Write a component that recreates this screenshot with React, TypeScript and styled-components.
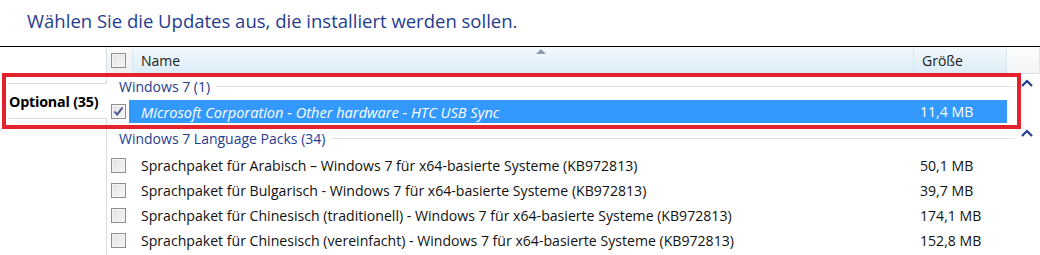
import React from "react";
import styled, { createGlobalStyle } from "styled-components";

const Global = createGlobalStyle`
  html, body { margin: 0; padding: 0; background: #fff; }
  body { font-family: "Open Sans", "Noto Sans", sans-serif; width: 1040px; height: 255px; overflow: hidden; }
`;

const Page = styled.div`
  position: relative;
  width: 1040px;
  height: 255px;
  overflow: hidden;
`;

const Title = styled.div`
  height: 46px;
  box-sizing: border-box;
  padding: 8px 0 0 27px;
  font-size: 18.5px;
  color: #1f3d8f;
`;

const Frame = styled.div`
  border-top: 1px solid #000;
  display: grid;
  grid-template-columns: 107px 1fr;
  height: 208px;
`;

const Sidebar = styled.div`
  border-right: 1px solid #d6dde3;
  padding-top: 36px;
`;

const Tab = styled.div`
  margin-left: 7px;
  margin-right: -1px;
  height: 34px;
  border-top: 1px solid #d6dde3;
  border-bottom: 1px solid #d6dde3;
  background: #fff;
  display: flex;
  align-items: center;
  padding-left: 2px;
  font-weight: 700;
  font-size: 14.3px;
  letter-spacing: -0.2px;
  color: #000;
  white-space: nowrap;
  position: relative;
  z-index: 1;
`;

const Content = styled.div`
  display: flex;
  flex-direction: column;
`;

const Header = styled.div`
  display: grid;
  grid-template-columns: 26px 781px 93px 1fr;
  height: 26px;
  border-bottom: 1px solid #d5e3ec;
`;

const HeadCell = styled.div<{ $tone: "gray" | "blue" | "plain" }>`
  position: relative;
  display: flex;
  align-items: center;
  padding-left: ${(p) => (p.$tone === "gray" ? "4px" : "8px")};
  border-right: 1px solid #dde6ec;
  font-size: 14px;
  color: #1a1a1a;
  background: ${(p) =>
    p.$tone === "blue"
      ? "linear-gradient(#f3f9fd, #dbecf7)"
      : p.$tone === "gray"
      ? "linear-gradient(#fafafa, #eef1f3)"
      : "linear-gradient(#fdfdfd, #f2f4f6)"};
`;

const SortArrow = styled.svg`
  position: absolute;
  top: 1px;
  left: 403px;
`;

const Box = styled.div`
  width: 13px;
  height: 13px;
  border: 1px solid #8f8f8f;
  background: linear-gradient(135deg, #e2e2e2, #f6f6f6);
  box-shadow: inset 0 0 0 1px #f4f4f4;
  display: flex;
  align-items: center;
  justify-content: center;
  flex: none;
`;

const GroupHead = styled.div<{ $h: number }>`
  height: ${(p) => p.$h}px;
  display: flex;
  align-items: center;
  padding-left: 12px;
  font-size: 14px;
  color: #1f3d8f;
  gap: 6px;
  position: relative;
`;

const GroupLine = styled.div`
  flex: 1;
  height: 1px;
  background: #dde3e8;
  margin-right: 25px;
`;

const Chevron = styled.svg`
  position: absolute;
  right: 7px;
  top: 5px;
`;

const Row = styled.div`
  height: 25px;
  display: grid;
  grid-template-columns: 18px 791px 87px;
  align-items: center;
  padding-left: 4px;
`;

const CheckCell = styled.div`
  display: flex;
  align-items: center;
`;

const NameCell = styled.div<{ $selected?: boolean }>`
  height: 23px;
  display: flex;
  align-items: center;
  padding-left: 12px;
  font-size: ${(p) => (p.$selected ? "14.6px" : "14.1px")};
  white-space: nowrap;
  color: ${(p) => (p.$selected ? "#fff" : "#111")};
  font-style: ${(p) => (p.$selected ? "italic" : "normal")};
  background: ${(p) => (p.$selected ? "#3399ff" : "transparent")};
`;

const SizeCell = styled(NameCell)`
  padding-left: 0;
  font-style: normal;
  font-size: 14.1px;
`;

const Highlight = styled.div`
  position: absolute;
  left: 2px;
  top: 73px;
  width: 1019px;
  height: 56px;
  box-sizing: border-box;
  border: 4px solid #e3222d;
  pointer-events: none;
  z-index: 5;
`;

const Check = () => (
  <svg width="11" height="11" viewBox="0 0 11 11">
    <path d="M1.5 5.5 L4.2 8.5 L9.5 1.5" fill="none" stroke="#3b4f86" strokeWidth="1.8" />
  </svg>
);

const Up = () => (
  <Chevron width="12" height="8" viewBox="0 0 12 8">
    <path d="M1 7 L6 2 L11 7" fill="none" stroke="#1f3d8f" strokeWidth="2.2" />
  </Chevron>
);

const packs = [
  ["Sprachpaket für Arabisch – Windows 7 für x64-basierte Systeme (KB972813)", "50,1 MB"],
  ["Sprachpaket für Bulgarisch - Windows 7 für x64-basierte Systeme (KB972813)", "39,7 MB"],
  ["Sprachpaket für Chinesisch (traditionell) - Windows 7 für x64-basierte Systeme (KB972813)", "174,1 MB"],
  ["Sprachpaket für Chinesisch (vereinfacht) - Windows 7 für x64-basierte Systeme (KB972813)", "152,8 MB"],
];

export default function App() {
  return (
    <Page>
      <Global />
      <Title>Wählen Sie die Updates aus, die installiert werden sollen.</Title>
      <Frame>
        <Sidebar>
          <Tab>Optional (35)</Tab>
        </Sidebar>
        <Content>
          <Header>
            <HeadCell $tone="gray">
              <Box />
            </HeadCell>
            <HeadCell $tone="blue">
              Name
              <SortArrow width="10" height="6" viewBox="0 0 10 6">
                <path d="M0 6 L5 1 L10 6 Z" fill="#8a9aa8" />
              </SortArrow>
            </HeadCell>
            <HeadCell $tone="blue">Größe</HeadCell>
            <HeadCell $tone="plain" />
          </Header>
          <GroupHead $h={25}>
            Windows 7 (1)
            <GroupLine />
            <Up />
          </GroupHead>
          <Row>
            <CheckCell>
              <Box>
                <Check />
              </Box>
            </CheckCell>
            <NameCell $selected>Microsoft Corporation - Other hardware - HTC USB Sync</NameCell>
            <SizeCell $selected>11,4 MB</SizeCell>
          </Row>
          <GroupHead $h={29}>
            Windows 7 Language Packs (34)
            <GroupLine />
            <Up />
          </GroupHead>
          {packs.map(([n, s]) => (
            <Row key={n}>
              <CheckCell>
                <Box />
              </CheckCell>
              <NameCell>{n}</NameCell>
              <SizeCell>{s}</SizeCell>
            </Row>
          ))}
        </Content>
      </Frame>
      <Highlight />
    </Page>
  );
}
